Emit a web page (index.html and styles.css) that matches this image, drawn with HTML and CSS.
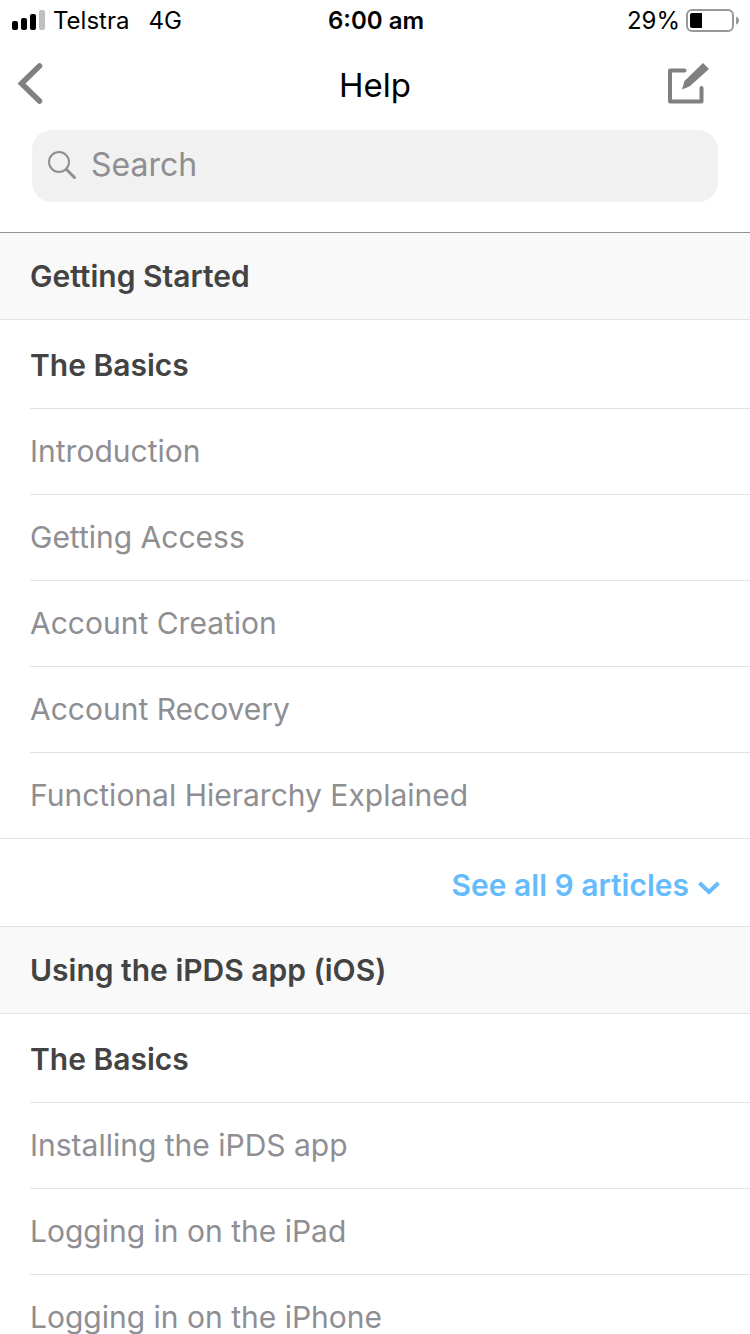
FILE: index.html
```html
<!DOCTYPE html>
<html lang="en">
<head>
<meta charset="utf-8">
<meta name="viewport" content="width=device-width, initial-scale=1">
<title>Help</title>
<link rel="stylesheet" href="styles.css">
</head>
<body>
<div class="app">
  <div class="status">
    <div class="carrier">
      <svg class="signal" width="34" height="20" viewBox="0 0 34 20" aria-hidden="true">
        <rect x="0" y="11" width="6" height="9" rx="2"/>
        <rect x="9" y="8" width="6" height="12" rx="2"/>
        <rect x="18" y="4" width="6" height="16" rx="2"/>
        <rect x="27" y="0" width="6" height="20" rx="2" fill="#bfbfbf"/>
      </svg>
      <span>Telstra</span>
      <span class="network">4G</span>
    </div>
    <time class="time">6:00 am</time>
    <div class="power">
      <span>29%</span>
      <svg width="54" height="24" viewBox="0 0 54 24" aria-hidden="true">
        <rect x="1" y="1" width="46" height="21" rx="5" fill="none" stroke="#999" stroke-width="2"/>
        <path d="M4 6q0-2 2-2h10v15H6q-2 0-2-2z"/>
        <path d="M50 7.500q3 1 3 4t-3 4z" fill="#999"/>
      </svg>
    </div>
  </div>
  <header class="nav">
    <button class="icon-button" type="button" aria-label="Back">
      <svg width="26" height="42" viewBox="0 0 26 42" aria-hidden="true"><path d="M21.500 3 3.500 20.500l18 17.500" fill="none" stroke="#808080" stroke-width="5.500" stroke-linecap="round" stroke-linejoin="miter"/></svg>
    </button>
    <h1 class="title">Help</h1>
    <button class="icon-button compose" type="button" aria-label="Compose">
      <svg width="42" height="42" viewBox="0 0 42 42" aria-hidden="true">
        <path d="M16.500 7.500H2v31h31.500V25" fill="none" stroke="#808080" stroke-width="4" stroke-linecap="round" stroke-linejoin="round"/>
        <path d="M35 0l6 6L21.500 23.500l-7.500 3L16.500 18z" fill="#808080"/>
      </svg>
    </button>
  </header>
  <div class="search-area">
    <label class="search">
      <svg width="30" height="30" viewBox="0 0 30 30" fill="none" stroke="#8e8e93" aria-hidden="true">
        <circle cx="11" cy="11" r="10" stroke-width="2"/>
        <path d="M18.500 18.500l8 8" stroke-width="3" stroke-linecap="round"/>
      </svg>
      <input class="search-input" type="text" placeholder="Search" aria-label="Search">
    </label>
  </div>
  <main class="content">
    <section>
      <h2 class="section-title">Getting Started</h2>
      <h3 class="topic">The Basics</h3>
      <ul class="articles">
        <li><a href="#introduction">Introduction</a></li>
        <li><a href="#access">Getting Access</a></li>
        <li><a href="#creation">Account Creation</a></li>
        <li><a href="#recovery">Account Recovery</a></li>
        <li><a href="#hierarchy">Functional Hierarchy Explained</a></li>
      </ul>
      <button class="see-all" type="button">
        <span>See all 9 articles</span>
        <svg width="22" height="14" viewBox="0 0 22 14" aria-hidden="true"><path d="M1.500 2 11 11 20.500 2" fill="none" stroke="#66bbfc" stroke-width="4"/></svg>
      </button>
    </section>
    <section>
      <h2 class="section-title">Using the iPDS app (iOS)</h2>
      <h3 class="topic">The Basics</h3>
      <ul class="articles">
        <li><a href="#install">Installing the iPDS app</a></li>
        <li><a href="#ipad">Logging in on the iPad</a></li>
        <li><a href="#iphone">Logging in on the iPhone</a></li>
      </ul>
    </section>
  </main>
</div>
</body>
</html>
```
FILE: styles.css
```css
* { box-sizing: border-box; }
body {
  margin: 0;
  background: #fff;
  color: #000;
  font-family: Inter, "Liberation Sans", sans-serif;
}
h1, h2, h3, ul { margin: 0; padding: 0; }
button { border: 0; padding: 0; background: none; font: inherit; cursor: pointer; }
svg { display: block; flex: none; }

.app { display: flex; flex-direction: column; height: 100vh; overflow: hidden; }

.status {
  display: grid;
  grid-template-columns: 1fr auto 1fr;
  align-items: center;
  height: 42px;
  padding: 0 10px 0 12px;
  font-size: 24px;
  line-height: 42px;
  flex: none;
}
.carrier { display: flex; align-items: center; gap: 7px; }
.signal { margin-bottom: 2px; }
.network { margin-left: 12px; }
.time { font-weight: 600; }
.power { display: flex; align-items: center; justify-content: flex-end; gap: 6px; }

.nav {
  display: grid;
  grid-template-columns: 1fr auto 1fr;
  align-items: center;
  height: 86px;
  padding: 0 18px;
  flex: none;
}
.icon-button { justify-self: start; margin-bottom: 2px; }
.compose { justify-self: end; margin-right: 22px; }
.title { font-size: 33px; font-weight: 400; line-height: 40px; }

.search-area { padding: 2px 32px 30px; border-bottom: 1px solid #939395; flex: none; }
.search {
  display: flex;
  align-items: center;
  gap: 13px;
  height: 72px;
  padding: 0 16px;
  border-radius: 20px;
  background: #f1f1f1;
}
.search-input {
  flex: 1;
  min-width: 0;
  height: 72px;
  border: 0;
  padding: 0 0 4px;
  outline: 0;
  background: none;
  color: #000;
  font: 400 32px Inter, "Liberation Sans", sans-serif;
}
.search-input::placeholder { color: #8e8e93; opacity: 1; }

.content { flex: 1; min-height: 0; overflow-y: auto; scrollbar-width: none; font-size: 30px; }
.section-title, .topic {
  padding-left: 30px;
  border-bottom: 1px solid #e3e3e4;
  color: #434344;
  font-size: 30px;
  font-weight: 600;
}
.section-title { background: #f9f9f9; line-height: 86px; }
.topic { margin-left: 30px; padding: 3px 0 0; line-height: 85px; }
.articles { list-style: none; }
.articles a {
  display: block;
  margin-left: 30px;
  border-bottom: 1px solid #e3e3e4;
  color: #8e8e93;
  line-height: 85px;
  text-decoration: none;
}
.articles li:last-child a { margin-left: 0; padding-left: 30px; }
.see-all {
  display: flex;
  align-items: center;
  justify-content: flex-end;
  gap: 9px;
  width: 100%;
  padding: 5px 30px 0 0;
  border-bottom: 1px solid #e3e3e4;
  color: #66bbfc;
  font-weight: 600;
  line-height: 82px;
}
.see-all svg { margin-top: 5px; }
```
